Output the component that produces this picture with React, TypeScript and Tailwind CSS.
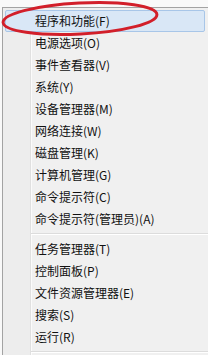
import React from "react";

// Win+X quick-link menu, first entry circled in red
const groupA = [
  "程序和功能(F)",
  "电源选项(O)",
  "事件查看器(V)",
  "系统(Y)",
  "设备管理器(M)",
  "网络连接(W)",
  "磁盘管理(K)",
  "计算机管理(G)",
  "命令提示符(C)",
  "命令提示符(管理员)(A)",
];

const groupB = ["任务管理器(T)", "控制面板(P)", "文件资源管理器(E)", "搜索(S)", "运行(R)"];

const MenuItem: React.FC<{ label: string; active?: boolean }> = ({ label, active }) => (
  <div
    className={
      active
        ? "ml-[2px] mr-[3px] h-[22px] flex items-center pl-[29px] border border-[#a8c6e8] bg-[#d9e7f6] rounded-[2px]"
        : "ml-[2px] mr-[3px] h-[22px] flex items-center pl-[29px] border border-transparent"
    }
  >
    <span className="text-[12px] leading-none text-[#111]">{label}</span>
  </div>
);

const Separator: React.FC = () => (
  <div className="h-[8px] pl-[28px] pt-[3px]">
    <div className="h-px bg-[#dcdcdc]" />
    <div className="h-px bg-white" />
  </div>
);

const App: React.FC = () => {
  return (
    <div
      className="relative w-[208px] h-[355px] overflow-hidden bg-[#f9f9f9] pt-[7px] pl-[2px]"
      style={{ fontFamily: '"Noto Sans CJK SC", "Noto Sans", sans-serif' }}
    >
      <div className="h-full border-l border-t border-[#a3a3a3] pt-[2px] bg-[linear-gradient(to_right,#ededed_27px,#e0e0e0_27px,#e0e0e0_28px,#fbfbfb_28px,#fbfbfb_29px,#f0f0f0_29px)]">
        {groupA.map((label, i) => (
          <MenuItem key={label} label={label} active={i === 0} />
        ))}
        <Separator />
        {groupB.map((label) => (
          <MenuItem key={label} label={label} />
        ))}
        <Separator />
      </div>

      {/* red annotation ellipse over the first item */}
      <svg className="absolute left-0 top-0" width="208" height="40" viewBox="0 0 208 40">
        <ellipse
          cx="80"
          cy="18.5"
          rx="77"
          ry="15.5"
          fill="none"
          stroke="#d21f2a"
          strokeWidth="3"
          transform="rotate(-3 80 18.5)"
        />
      </svg>
    </div>
  );
};

export default App;
